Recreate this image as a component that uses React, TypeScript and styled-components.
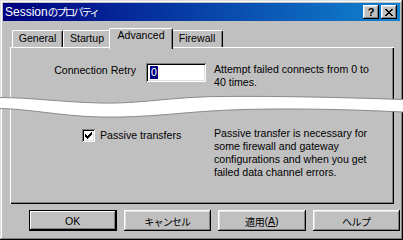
import React from "react";
import styled, { createGlobalStyle } from "styled-components";

const GlobalStyle = createGlobalStyle`
  html, body { margin: 0; padding: 0; background: #c0c0c0; }
  body {
    font-family: "Liberation Sans", "Noto Sans CJK JP", Arial, sans-serif;
    font-size: 10.6px;
    color: #000;
  }
  * { box-sizing: border-box; }
`;

const Window = styled.div`
  position: relative;
  width: 403px;
  height: 240px;
  background: #c0c0c0;
  padding: 3px;
  box-shadow: inset -1px -1px #000, inset 1px 1px #dfdfdf,
    inset -2px -2px #808080, inset 2px 2px #fff;
  display: flex;
  flex-direction: column;
  overflow: hidden;
`;

const TitleBar = styled.div`
  height: 18px;
  display: flex;
  align-items: center;
  padding: 0 3px 0 2px;
  background: linear-gradient(to right, #000080, #1084d0);
  color: #fff;
`;

const TitleText = styled.div`
  flex: 1;
  font-size: 12px;
  line-height: 18px;
  white-space: nowrap;
`;

const Jp = styled.span<{ $fs: number; $ls: number }>`
  font-family: "Noto Sans CJK JP", sans-serif;
  font-size: ${(p) => p.$fs}px;
  letter-spacing: ${(p) => p.$ls}px;
`;

const CaptionButtons = styled.div`
  display: flex;
  gap: 2px;
`;

const CapButton = styled.div`
  width: 16px;
  height: 14px;
  background: #c0c0c0;
  box-shadow: inset -1px -1px #000, inset 1px 1px #fff,
    inset -2px -2px #808080, inset 2px 2px #dfdfdf;
  display: flex;
  align-items: center;
  justify-content: center;
  color: #000;
  font-weight: bold;
  font-size: 11px;
  line-height: 14px;
`;

const Body = styled.div`
  padding: 7px 0 0 7px;
  display: flex;
  flex-direction: column;
`;

const TabStrip = styled.div`
  display: flex;
  align-items: flex-end;
  height: 19px;
  padding-left: 2px;
  position: relative;
  z-index: 1;
`;

const Tab = styled.div<{ $w: number; $active?: boolean }>`
  width: ${(p) => p.$w + (p.$active ? 4 : 0)}px;
  height: ${(p) => (p.$active ? 21 : 17)}px;
  margin: 0 ${(p) => (p.$active ? -2 : 0)}px ${(p) => (p.$active ? -2 : 0)}px;
  padding-top: ${(p) => (p.$active ? 0 : 1)}px;
  background: #c0c0c0;
  border-left: 1px solid #fff;
  border-top: 1px solid #fff;
  border-right: 1px solid #000;
  border-radius: 2px 2px 0 0;
  box-shadow: inset -1px 0 #808080;
  text-align: center;
  line-height: 13px;
  white-space: nowrap;
  position: relative;
  z-index: ${(p) => (p.$active ? 2 : 0)};
`;

const Panel = styled.div`
  width: 384px;
  height: 157px;
  padding: 16px 0 0 2px;
  box-shadow: inset 1px 1px #fff, inset -1px -1px #000, inset -2px -2px #808080;
  display: flex;
  flex-direction: column;
`;

const Row = styled.div<{ $mt?: number }>`
  display: flex;
  align-items: flex-start;
  margin-top: ${(p) => p.$mt ?? 0}px;
`;

const Label = styled.div`
  width: 124px;
  text-align: right;
  margin-top: 1px;
  line-height: 13px;
  white-space: nowrap;
`;

const Field = styled.div`
  width: 60px;
  height: 19px;
  margin-left: 10px;
  background: #fff;
  box-shadow: inset 1px 1px #808080, inset -1px -1px #fff,
    inset 2px 2px #000, inset -2px -2px #dfdfdf;
  padding: 3px 0 0 4px;
  line-height: 13px;
`;

const Selected = styled.span`
  background: #000080;
  color: #fff;
  display: inline-block;
  padding: 0 1px;
`;

const Desc = styled.div<{ $ml: number }>`
  margin-left: ${(p) => p.$ml}px;
  line-height: 13px;
  white-space: nowrap;
`;

const CheckCell = styled.label`
  width: 194px;
  padding: 2px 0 0 70px;
  display: flex;
  align-items: center;
  gap: 5px;
  line-height: 13px;
  white-space: nowrap;
`;

const CheckBox = styled.div`
  width: 13px;
  height: 13px;
  background: #fff;
  box-shadow: inset 1px 1px #808080, inset -1px -1px #fff,
    inset 2px 2px #000, inset -2px -2px #dfdfdf;
  display: flex;
  align-items: center;
  justify-content: center;
`;

const ButtonRow = styled.div`
  display: flex;
  gap: 7px;
  padding-left: 19px;
  margin-top: 6px;
`;

const Button = styled.div<{ $default?: boolean }>`
  width: 88px;
  height: 21px;
  background: #c0c0c0;
  display: flex;
  align-items: center;
  justify-content: center;
  line-height: 13px;
  padding-top: 1px;
  box-shadow: ${(p) =>
    p.$default
      ? "inset 0 0 0 1px #000, inset -2px -2px #000, inset 2px 2px #fff, inset -3px -3px #808080"
      : "inset -1px -1px #000, inset 1px 1px #fff, inset -2px -2px #808080, inset 2px 2px #dfdfdf"};
`;

const Mnemonic = styled.span`
  text-decoration: underline;
`;

const WaveLayer = styled.svg`
  position: absolute;
  left: 0;
  top: 0;
  pointer-events: none;
  z-index: 5;
`;

const CloseGlyph = () => (
  <svg width="8" height="7" viewBox="0 0 8 7" shapeRendering="crispEdges">
    <path
      fill="#000"
      d="M0 0h2v1H0zM6 0h2v1H6zM1 1h2v1H1zM5 1h2v1H5zM2 2h4v1H2zM3 3h2v1H3zM2 4h4v1H2zM1 5h2v1H1zM5 5h2v1H5zM0 6h2v1H0zM6 6h2v1H6z"
    />
  </svg>
);

const CheckGlyph = () => (
  <svg width="7" height="7" viewBox="0 0 7 7" shapeRendering="crispEdges">
    <path
      fill="#000"
      d="M6 0h1v1H6zM5 1h2v1H5zM0 2h1v1H0zM4 2h3v1H4zM0 3h2v1H0zM3 3h3v1H3zM0 4h5v1H0zM1 5h3v1H1zM2 6h1v1H2z"
    />
  </svg>
);

const top = "M0,97.5 C30,97.5 60,102 100,103 C140,104 170,97 220,96.5 C270,96 330,97 403,99.5";
const bottom = "M403,112 C340,109 280,108 230,110 C180,112 150,118 100,117 C60,116 30,109 0,108.5";

export default function App() {
  return (
    <>
      <GlobalStyle />
      <Window>
        <TitleBar>
          <TitleText>
            Session<Jp $fs={10.5} $ls={-2}>のプロパティ</Jp>
          </TitleText>
          <CaptionButtons>
            <CapButton>?</CapButton>
            <CapButton>
              <CloseGlyph />
            </CapButton>
          </CaptionButtons>
        </TitleBar>
        <Body>
          <TabStrip>
            <Tab $w={51}>General</Tab>
            <Tab $w={48}>Startup</Tab>
            <Tab $w={60} $active>
              Advanced
            </Tab>
            <Tab $w={52}>Firewall</Tab>
          </TabStrip>
          <Panel>
            <Row>
              <Label>Connection Retry</Label>
              <Field>
                <Selected>0</Selected>
              </Field>
              <Desc $ml={8}>
                Attempt failed connects from 0 to
                <br />
                40 times.
              </Desc>
            </Row>
            <Row $mt={38}>
              <CheckCell>
                <CheckBox>
                  <CheckGlyph />
                </CheckBox>
                Passive transfers
              </CheckCell>
              <Desc $ml={8}>
                Passive transfer is necessary for
                <br />
                some firewall and gateway
                <br />
                configurations and when you get
                <br />
                failed data channel errors.
              </Desc>
            </Row>
          </Panel>
          <ButtonRow>
            <Button $default>OK</Button>
            <Button>
              <Jp $fs={10} $ls={-0.8}>キャンセル</Jp>
            </Button>
            <Button>
              <Jp $fs={10} $ls={-0.3}>適用</Jp>(<Mnemonic>A</Mnemonic>)
            </Button>
            <Button>
              <Jp $fs={10} $ls={-0.5}>ヘルプ</Jp>
            </Button>
          </ButtonRow>
        </Body>
        <WaveLayer width="403" height="240" viewBox="0 0 403 240">
          <path d={`${top} L403,112 ${bottom.replace("M403,112", "")} Z`} fill="#fff" />
          <path d={top} fill="none" stroke="#8a8a8a" strokeWidth="1" />
          <path d={bottom} fill="none" stroke="#8a8a8a" strokeWidth="1" />
        </WaveLayer>
      </Window>
    </>
  );
}
